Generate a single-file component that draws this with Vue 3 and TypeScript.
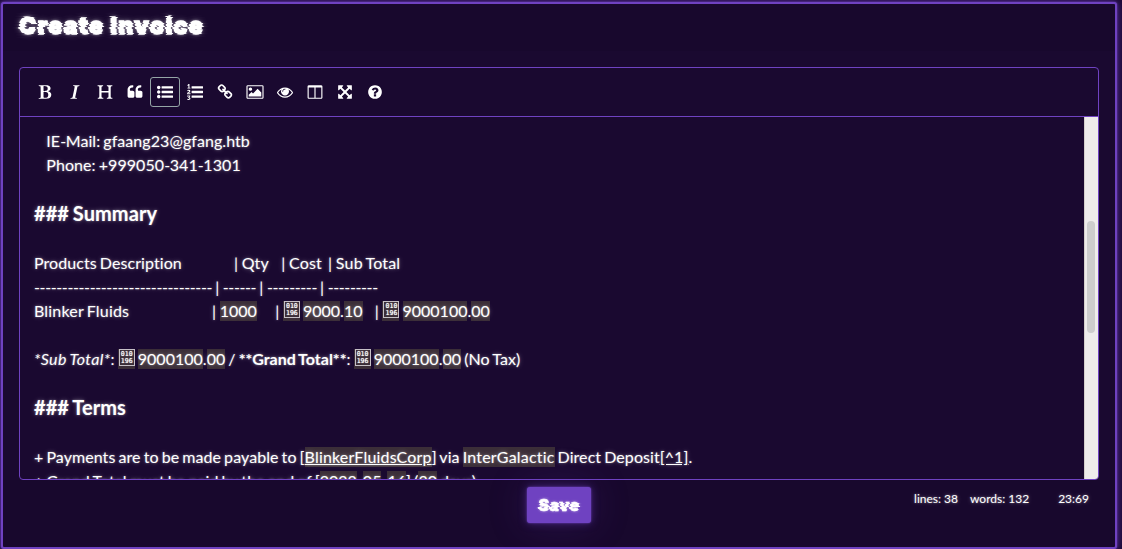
<script setup lang="ts">
interface Tool {
  name: string
  d: string
  width?: number
  active?: boolean
}

interface Segment {
  t: string
  k?: 'mark' | 'word mark' | 'em' | 'strong' | 'link' | 'linkmark' | 'box' | 'dashes' | 'word' | 'pipe'
}

interface Line {
  heading?: boolean
  parts: Segment[]
}

const tools: Tool[] = [
  { name: 'Bold', d: 'M747 1521q74 32 140 32 376 0 376-335 0-114-41-180-27-44-61.5-74t-67.5-46.5-80.5-25-84-10.5-94.5-2q-73 0-101 10 0 53-.5 159t-.5 158q0 8-1 67.5t-.5 96.5 4.5 83.5 12 66.5zm-14-746q42 7 109 7 82 0 143-13t110-44.5 74.5-89.5 25.5-142q0-70-29-122.5t-79-82-108-43.5-124-14q-50 0-130 13 0 50 4 151t4 152q0 27-.5 80t-.5 79q0 46 1 69zm-541 889l2-94q15-4 85-16t106-27q7-12 12.5-27t8.5-33.5 5.5-32.5 3-37.5.5-34v-65.5q0-982-22-1025-4-8-22-14.5t-44.5-11-49.5-7-48.5-4.5-30.5-3l-4-83q98-2 340-11.5t373-9.5q23 0 68 .5t68 .5q70 0 136.5 13t128.5 42 108 71 74 104.5 28 137.5q0 52-16.5 95.5t-39 72-64.5 57.5-73 45-84 40q154 35 256.5 134t102.5 248q0 100-35 179.5t-93.5 130.5-138 85.5-163.5 48.5-176 14q-44 0-132-3t-132-3q-106 0-307 11t-231 12z' },
  { name: 'Italic', d: 'M384 1662l17-85q22-7 61.5-16.5t72-19 59.5-23.5q28-35 41-101 1-7 62-289t114-543.5 52-296.5v-25q-24-13-54.5-18.5t-69.5-8-58-5.5l19-103q33 2 120 6.5t149.5 7 120.5 2.5q48 0 98.5-2.5t121-7 98.5-6.5q-5 39-19 89-30 10-101.5 28.5t-108.5 33.5q-8 19-14 42.5t-9 40-7.5 45.5-6.5 42q-27 148-87.5 419.5t-77.5 355.5q-2 9-13 58t-20 90-16 83.5-6 57.5l1 18q17 4 185 31-3 44-16 99-11 0-32.5 1.5t-32.5 1.5q-29 0-87-10t-86-10q-138-2-206-2-51 0-143 9t-121 11z' },
  { name: 'Heading', d: 'M1682 1664q-44 0-132.5-3.5t-133.5-3.5q-44 0-132 3.5t-132 3.5q-24 0-37-20.5t-13-45.5q0-31 17-46t39-17 51-7 45-15q33-21 33-140l-1-391q0-21-1-31-13-4-50-4h-675q-38 0-51 4-1 10-1 31l-1 371q0 142 37 164 16 10 48 13t57 3.5 45 15 20 45.5q0 26-12.5 48t-36.5 22q-47 0-139.5-3.5t-138.5-3.5q-43 0-128 3.5t-127 3.5q-23 0-35.5-21t-12.5-45q0-30 15.5-45t36-17.5 47.5-7.5 42-15q33-23 33-143l-1-57v-813q0-3 .5-26t0-36.5-1.5-38.5-3.5-42-6.5-36.5-11-31.5-16-18q-15-10-45-12t-53-2-41-14-18-45q0-26 12-48t36-22q46 0 138.5 3.5t138.5 3.5q42 0 126.5-3.5t126.5-3.5q25 0 37.5 22t12.5 48q0 30-17 43.5t-38.5 14.5-49.5 4-43 13q-35 21-35 160l1 320q0 21 1 32 13 3 39 3h699q25 0 38-3 1-11 1-32l1-320q0-139-35-160-18-11-58.5-13t-66-13-25.5-49q0-26 12.5-48t37.5-22q44 0 132 3.5t132 3.5q43 0 129-3.5t129-3.5q24 0 36.5 22t12.5 48q0 31-17.5 44t-40 14.5-51.5 3.5-45 13q-35 23-35 160l1 942q0 119 34 140 16 10 46 13.5t53.5 4.5 41.5 15.5 18 44.5q0 26-12 48t-36 22z' },
  { name: 'Quote', d: 'M832 960v384q0 80-56 136t-136 56h-384q-80 0-136-56t-56-136v-704q0-104 40.5-198.5t109.5-163.5 163.5-109.5 198.5-40.5h64q26 0 45 19t19 45v128q0 26-19 45t-45 19h-64q-106 0-181 75t-75 181v32q0 40 28 68t68 28h224q80 0 136 56t56 136zm896 0v384q0 80-56 136t-136 56h-384q-80 0-136-56t-56-136v-704q0-104 40.5-198.5t109.5-163.5 163.5-109.5 198.5-40.5h64q26 0 45 19t19 45v128q0 26-19 45t-45 19h-64q-106 0-181 75t-75 181v32q0 40 28 68t68 28h224q80 0 136 56t56 136z' },
  { name: 'Generic List', active: true, d: 'M192 192a192 192 0 1 0 .1 0zM192 704a192 192 0 1 0 .1 0zM192 1216a192 192 0 1 0 .1 0zM544 256h1216q32 0 32 32v192q0 32-32 32h-1216q-32 0-32-32v-192q0-32 32-32zM544 768h1216q32 0 32 32v192q0 32-32 32h-1216q-32 0-32-32v-192q0-32 32-32zM544 1280h1216q32 0 32 32v192q0 32-32 32h-1216q-32 0-32-32v-192q0-32 32-32z' },
  { name: 'Numbered List', d: 'M381 1620q0 80-54.500 126t-135.500 46q-106 0-172-66l57-88q49 45 106 45 29 0 50.500-14.500t21.500-42.500q0-64-105-56l-26-56q8-10 32.500-43.500t42.500-54 37-38.500v-1q-16 0-48.500 1t-48.500 1v53h-106v-152h333v88l-95 115q51 12 81 49t30 88zm2-627v159h-362q-6-36-6-54 0-51 23.500-93t56.500-68 66-47.500 56.500-43.500 23.500-45q0-25-14.500-38.500t-39.500-13.500q-46 0-81 58l-85-59q24-51 71.500-79.500t105.500-28.500q73 0 123 41.500t50 112.500q0 50-34 91.500t-75 64.500-75.500 50.500-35.500 52.500h127v-60h105zM384 413v99h-335v-99h107q0-41 .5-121.500t.5-121.500v-12h-2q-8 17-50 54l-71-76 136-127h106v404h108zM544 256h1216q32 0 32 32v192q0 32-32 32h-1216q-32 0-32-32v-192q0-32 32-32zM544 768h1216q32 0 32 32v192q0 32-32 32h-1216q-32 0-32-32v-192q0-32 32-32zM544 1280h1216q32 0 32 32v192q0 32-32 32h-1216q-32 0-32-32v-192q0-32 32-32z' },
  { name: 'Create Link', d: 'M1520 1216q0-40-28-68l-208-208q-28-28-68-28-42 0-72 32 3 3 19 18.5t21.5 21.5 15 19 13 25.5 3.5 27.5q0 40-28 68t-68 28q-15 0-27.5-3.5t-25.5-13-19-15-21.5-21.5-18.5-19q-33 31-33 73 0 40 28 68l206 207q27 27 68 27 40 0 68-26l147-146q28-28 28-67zm-703-705q0-40-28-68l-206-207q-28-28-68-28-39 0-68 27l-147 146q-28 28-28 67 0 40 28 68l208 208q27 27 68 27 42 0 72-31-3-3-19-18.5t-21.5-21.5-15-19-13-25.5-3.5-27.5q0-40 28-68t68-28q15 0 27.5 3.5t25.5 13 19 15 21.5 21.5 18.5 19q33-31 33-73zm895 705q0 120-85 203l-147 146q-83 83-203 83-121 0-204-85l-206-207q-83-83-83-203 0-123 88-209l-88-88q-86 88-208 88-120 0-204-84l-208-208q-84-84-84-204t85-203l147-146q83-83 203-83 121 0 204 85l206 207q83 83 83 203 0 123-88 209l88 88q86-88 208-88 120 0 204 84l208 208q84 84 84 204z' },
  { name: 'Insert Image', width: 18, d: 'M640 576q0 80-56 136t-136 56-136-56-56-136 56-136 136-56 136 56 56 136zM1664 960v448h-1408v-192l320-320 160 160 512-512zM1760 256h-1600q-13 0-22.500 9.500t-9.500 22.500v1216q0 13 9.500 22.500t22.500 9.500h1600q13 0 22.500-9.500t9.500-22.500v-1216q0-13-9.500-22.500t-22.500-9.500zM1920 288v1216q0 66-47 113t-113 47h-1600q-66 0-113-47t-47-113v-1216q0-66 47-113t113-47h1600q66 0 113 47t47 113z' },
  { name: 'Toggle Preview', d: 'M1664 960q-152-236-381-353 61 104 61 225 0 185-131.5 316.5t-316.5 131.5-316.5-131.5-131.5-316.5q0-121 61-225-229 117-381 353 133 205 333.5 326.5t434.5 121.5 434.5-121.5 333.5-326.5zm-720-384q0-20-14-34t-34-14q-125 0-214.5 89.5t-89.5 214.5q0 20 14 34t34 14 34-14 14-34q0-86 61-147t147-61q20 0 34-14t14-34zm848 384q0 34-20 69-140 230-376.5 368.5t-499.5 138.5-499.5-139-376.5-368q-20-35-20-69t20-69q140-229 376.5-368t499.5-139 499.5 139 376.5 368q20 35 20 69z' },
  { name: 'Toggle Side by Side', d: 'M224 1536h608v-1152h-640v1120q0 13 9.500 22.500t22.500 9.500zM1600 1504v-1120h-640v1152h608q13 0 22.500-9.500t9.500-22.500zM1728 288v1216q0 66-47 113t-113 47h-1344q-66 0-113-47t-47-113v-1216q0-66 47-113t113-47h1344q66 0 113 47t47 113z' },
  { name: 'Toggle Fullscreen', d: 'M1411 541l-355 355 355 355 144-144q29-31 70-14 39 17 39 59v448q0 26-19 45t-45 19h-448q-42 0-59-40-17-39 14-69l144-144-355-355-355 355 144 144q31 30 14 69-17 40-59 40h-448q-26 0-45-19t-19-45v-448q0-42 40-59 39-17 69 14l144 144 355-355-355-355-144 144q-19 19-45 19-12 0-24-5-40-17-40-59v-448q0-26 19-45t45-19h448q42 0 59 40 17 39-14 69l-144 144 355 355 355-355-144-144q-31-30-14-69 17-40 59-40h448q26 0 45 19t19 45v448q0 42-39 59-13 5-25 5-26 0-45-19z' },
  { name: 'Markdown Guide', d: 'M1024 1376v-192q0-14-9-23t-23-9h-192q-14 0-23 9t-9 23v192q0 14 9 23t23 9h192q14 0 23-9t9-23zm256-672q0-88-55.5-163t-138.5-116-170-41q-243 0-371 213-15 24 8 42l132 100q7 6 19 6 16 0 25-12 53-68 86-92 34-24 86-24 48 0 85.5 26t37.5 59q0 38-20 61t-68 45q-63 28-115.5 86.5t-52.5 125.5v36q0 14 9 23t23 9h192q14 0 23-9t9-23q0-19 21.500-49.500t54.500-49.500q32-18 49-28.500t46-35 44.500-48 28-60.500 12.500-81zm384 192q0 209-103 385.500t-279.500 279.500-385.500 103-385.500-103-279.500-279.500-103-385.500 103-385.500 279.500-279.500 385.500-103 385.500 103 279.500 279.500 103 385.500z' },
]

const sp = (n: number) => ' '.repeat(n)
const text = (t: string): Segment => ({ t })
const word = (t: string): Segment => ({ t, k: 'word' })
const mark = (t: string): Segment => ({ t, k: 'mark' })
const dashes = (n: number): Segment => ({ t: '-'.repeat(n), k: 'dashes' })
const pipe: Segment = { t: '|', k: 'pipe' }
const box: Segment = { t: '', k: 'box' }
const blank: Line = { parts: [text(' ')] }

const lines: Line[] = [
  { parts: [text(sp(4) + 'IE'), dashes(1), text('Mail: gfaang23@gfang.htb')] },
  { parts: [text(sp(4) + 'Phone: '), mark2('+999050'), dashes(1), mark2('341'), dashes(1), mark2('1301')] },
  blank,
  { heading: true, parts: [text('### Summary')] },
  blank,
  { parts: [text('Products Description' + sp(17)), pipe, word(' Qty'), text(sp(4)), pipe, word(' Cost'), text(sp(2)), pipe, word(' Sub Total')] },
  { parts: [dashes(32), text(' '), pipe, text(' '), dashes(6), text(' '), pipe, text(' '), dashes(9), text(' '), pipe, text(' '), dashes(9)] },
  { parts: [word('Blinker Fluids '), text(sp(26)), pipe, text(' '), mark('1000'), text(sp(6)), pipe, text(' '), box, text(' '), mark('9000'), text('.'), mark('10'), text(sp(4)), pipe, text(' '), box, text(' '), mark('9000100'), text('.'), mark('00')] },
  blank,
  { parts: [{ t: '*Sub Total*', k: 'em' }, text(': '), box, text(' '), mark('9000100'), text('.'), mark('00'), text(' / '), { t: '**Grand Total**', k: 'strong' }, text(': '), box, text(' '), mark('9000100'), text('.'), mark('00'), text(' (No Tax)')] },
  blank,
  { heading: true, parts: [text('### Terms')] },
  blank,
  { parts: [text('+ Payments are to be made payable to ['), { t: 'BlinkerFluidsCorp', k: 'linkmark' }, text('] via '), { t: 'InterGalactic', k: 'word mark' }, text(' Direct Deposit'), { t: '[^1]', k: 'link' }, text('.')] },
  { parts: [text('+ Grand Total must be paid by the end of ['), mark('2022'), text('-'), mark('05'), text('-'), mark('16'), text('] ('), mark('30'), text(' days)')] },
]

function mark2(t: string): Segment {
  return { t }
}
</script>

<template>
  <main class="panel">
    <svg class="defs" aria-hidden="true">
      <filter id="glitch" x="-5%" y="-20%" width="110%" height="140%" color-interpolation-filters="sRGB">
        <feTurbulence type="fractalNoise" baseFrequency="0.0001 0.7" numOctaves="2" seed="4" />
        <feColorMatrix type="matrix" values="1 0 0 0 0  0 0 0 0 .5  0 0 0 0 .5  0 0 0 0 1" result="n" />
        <feDisplacementMap in="SourceGraphic" in2="n" scale="11" xChannelSelector="R" yChannelSelector="G" />
      </filter>
    </svg>
    <header class="head"><h1><span class="glitch">Create Invoice</span></h1></header>
    <section class="body">
      <div class="editor">
        <div class="toolbar">
          <button v-for="tool in tools" :key="tool.name" :class="{ active: tool.active }" :aria-label="tool.name">
            <svg :width="tool.width ?? 16" height="16" :viewBox="tool.width ? '0 0 1920 1792' : '0 0 1792 1792'">
              <path :d="tool.d" :fill-rule="tool.width ? 'evenodd' : 'nonzero'" />
            </svg>
          </button>
        </div>
        <div class="content">
          <div class="lines">
            <div v-for="(line, i) in lines" :key="i" class="line" :class="{ heading: line.heading }"><template v-for="(p, j) in line.parts" :key="j"><span v-if="p.k === 'box'" class="mark box"><span class="hex"><span>010</span><span>196</span></span></span><span v-else :class="p.k">{{ p.t }}</span></template></div>
          </div>
          <div class="scroll"><div class="thumb"></div></div>
        </div>
      </div>
    </section>
    <footer class="foot">
      <button class="save"><span class="glitch">Save</span></button>
      <div class="status"><span>lines: 38</span><span>words: 132</span><span class="cursor">23:69</span></div>
    </footer>
  </main>
</template>

<style>
html, body { margin: 0; height: 100%; overflow: hidden; background: #1a0933; }
</style>

<style scoped>
.panel {
  box-sizing: border-box;
  width: 1116px;
  height: 547px;
  margin: 2px 0 0 1px;
  border: 2px solid #6f42c1;
  border-radius: 3px;
  background: #1a0930;
  box-shadow: 0 0 2px rgba(111, 66, 193, .9), 0 0 6px rgba(111, 66, 193, .55), 0 0 14px rgba(111, 66, 193, .3);
  color: #fff;
  font-family: Lato, "Liberation Sans", sans-serif;
  font-size: 16px;
  line-height: 24px;
  text-shadow: 0 0 2px rgba(255, 255, 255, .4), 0 0 5px rgba(255, 255, 255, .3);
  display: flex;
  flex-direction: column;
}
.defs { position: absolute; width: 0; height: 0; }
.head {
  box-sizing: border-box;
  height: 47px;
  padding: 9px 16px;
  background: rgba(0, 0, 0, .05);
}
h1 {
  margin: 0;
  font-family: Inter, Lato, sans-serif;
  font-weight: 900;
  font-size: 23px;
  line-height: 27px;
  letter-spacing: 1.35px;
  white-space: nowrap;
  -webkit-text-stroke: 1.4px #fff;
  text-shadow: 0 0 3px rgba(255, 255, 255, .8), 0 0 7px rgba(255, 255, 255, .4);
}
.glitch { display: inline-block; filter: url(#glitch); }
.body { padding: 16px 16px 0; }
.editor {
  box-sizing: border-box;
  height: 413px;
  border: 1px solid #6f42c1;
  border-radius: 4px;
  overflow: hidden;
  background: #1a0930;
}
.toolbar {
  box-sizing: border-box;
  height: 49px;
  display: flex;
  align-items: center;
  padding: 0 10px;
  border-bottom: 1px solid #6f42c1;
}
.toolbar button {
  box-sizing: border-box;
  width: 30px;
  height: 30px;
  padding: 0;
  border: 1px solid transparent;
  border-radius: 3px;
  background: none;
  display: flex;
  align-items: center;
  justify-content: center;
}
.toolbar button.active { border-color: #95a5a6; }
.toolbar svg { fill: #fff; flex: none; }
.content { display: flex; height: 362px; overflow: hidden; }
.lines {
  flex: 1;
  padding: 12px 0 0 14px;
  white-space: pre;
  overflow: hidden;
  letter-spacing: .07px;
  word-spacing: -1.1px;
}
.line { height: 24px; }
.heading { height: 26px; line-height: 24px; font-size: 20px; font-weight: 700; }
.mark, .linkmark {
  display: inline-block;
  height: 20px;
  line-height: 20px;
  background: #3b2e38;
}
.mark { letter-spacing: 0; }
.dashes { letter-spacing: -.38px; }
.pipe { letter-spacing: .55px; }
.word, .linkmark { letter-spacing: .18px; }
.word.mark { letter-spacing: .19px; }
.linkmark, .link { text-decoration: underline; }
.em { font-style: italic; letter-spacing: .4px; }
.strong { font-weight: 700; letter-spacing: 0; }
.box { width: 17px; vertical-align: bottom; margin-bottom: 2px; }
.hex {
  box-sizing: border-box;
  display: flex;
  flex-direction: column;
  align-items: center;
  width: 16px;
  height: 17px;
  margin-left: 1px;
  padding-top: 1px;
  border: 1px solid #c6c0c6;
  font: 6.6px/6.500px "DejaVu Sans Mono", monospace;
  word-spacing: 0;
  text-shadow: 0 0 1px #fff;
}
.scroll {
  box-sizing: border-box;
  width: 14px;
  background: #eeeceb;
  border-left: 1px solid #d5d0cc;
  padding: 104px 2px 0;
}
.thumb { width: 8px; height: 112px; border-radius: 4px; background: #cdcdcd; }
.foot {
  position: relative;
  flex: 1;
  display: flex;
  justify-content: center;
  align-items: flex-start;
  padding-top: 7px;
  background: rgba(0, 0, 0, .05);
}
.save {
  width: 64px;
  height: 36px;
  padding: 0;
  border: 0;
  border-radius: 3px;
  background: #6f42c1;
  color: #fff;
  font: 900 16px/24px Inter, Lato, sans-serif;
  letter-spacing: .4px;
  -webkit-text-stroke: .5px #fff;
  text-shadow: 0 0 3px rgba(255, 255, 255, .7);
  box-shadow: 0 0 2px #6f42c1, 0 0 8px rgba(111, 66, 193, .5), 0 0 40px rgba(111, 66, 193, .22);
}
.status {
  position: absolute;
  right: 26px;
  top: 7px;
  display: flex;
  font-size: 12px;
  gap: 12px;
}
.cursor { margin-left: 17px; }
</style>
